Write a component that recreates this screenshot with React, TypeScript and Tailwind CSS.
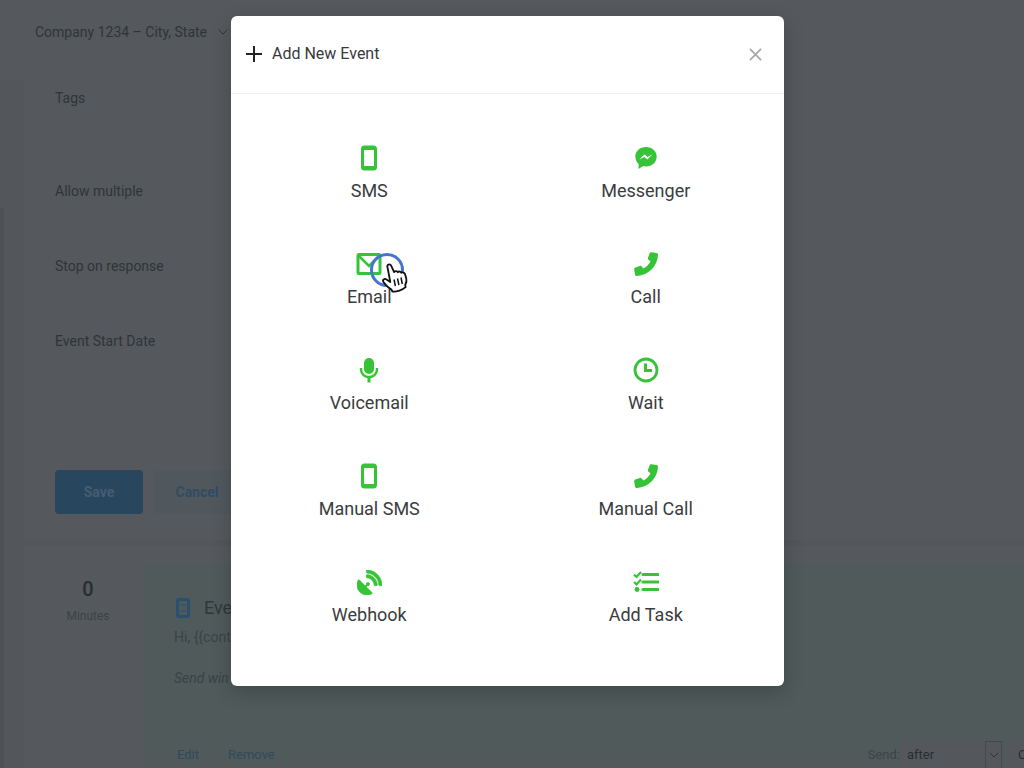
import type { ReactNode } from 'react';
import { FaSatelliteDish } from 'react-icons/fa';

function MobileIcon() {
  return (
    <svg viewBox="0 0 16 26" className="w-4 h-[26px]" fill="none" stroke="currentColor">
      <rect x="1.5" y="2" width="13" height="22" rx="2" strokeWidth="3" />
      <path d="M1.5 3.5h13M1.5 22.5h13" strokeWidth="3" />
    </svg>
  );
}

function MessengerIcon() {
  return (
    <svg viewBox="0 0 24 26" className="w-6 h-[26px]">
      <path
        fill="currentColor"
        d="M12 2C6 2 1.300 6.200 1.300 11.700c0 2.900 1.300 5.500 3.400 7.200L4.400 24l4.800-2.900c.9.200 1.800.3 2.800.3 6 0 10.700-4.200 10.700-9.700S18 2 12 2Z"
      />
      <path fill="#fff" d="m5.500 14.500 5-5.200 3.200 2.600 4.800-2.600-5.100 5.200-3.200-2.600Z" />
    </svg>
  );
}

function MailIcon() {
  return (
    <svg viewBox="0 0 26 26" className="w-[26px] h-[26px]" fill="none" stroke="currentColor">
      <rect x="2" y="3.500" width="22" height="19" rx="1" strokeWidth="3" />
      <path d="m3 5 10 10L23 5" strokeWidth="2.500" />
    </svg>
  );
}

function PhoneIcon() {
  return (
    <svg viewBox="0 0 26 26" className="w-[26px] h-[26px]" fill="currentColor">
      <path d="m18.500 1.200 5 .8c1 .2 1.600 1 1.500 2C24.300 15.500 15.500 24.300 4 25c-1 .1-1.800-.5-2-1.500l-.8-5c-.1-.9.400-1.600 1.200-1.900L6.700 15c.8-.3 1.600-.1 2.100.6l1.400 1.900c3.300-1.500 5.800-4 7.300-7.300l-1.900-1.400c-.7-.5-.9-1.300-.6-2.100l1.600-4.300c.3-.8 1-1.300 1.900-1.200Z" />
    </svg>
  );
}

function MicIcon() {
  return (
    <svg viewBox="0 0 20 26" className="w-5 h-[26px]" fill="none" stroke="currentColor">
      <rect x="5" y="1" width="10" height="16" rx="5" fill="currentColor" stroke="none" />
      <path d="M2 11v1.500a8 7.500 0 0 0 16 0V11" strokeWidth="2.400" />
      <path d="M10 20v5.500" strokeWidth="3" />
    </svg>
  );
}

function ClockIcon() {
  return (
    <svg viewBox="0 0 26 26" className="w-[26px] h-[26px]" fill="none" stroke="currentColor">
      <circle cx="13" cy="13" r="11" strokeWidth="2.800" />
      <path d="M12.500 6.500V13.500H19" strokeWidth="3" />
    </svg>
  );
}

function TaskIcon() {
  return (
    <svg viewBox="0 0 26 26" className="w-[26px] h-[26px]" fill="none" stroke="currentColor">
      <path d="M10 5.500h15M10 13h15M10 20.500h15" strokeWidth="3.200" strokeLinecap="round" />
      <path d="m1 5.500 2.500 2.500L8 3M1 13l2.500 2.500L8 10.500" strokeWidth="2.200" />
      <circle cx="4" cy="20.500" r="2.400" fill="currentColor" stroke="none" />
    </svg>
  );
}

function Pointer() {
  return (
    <svg viewBox="0 0 40 44" className="absolute left-[138px] top-5 w-10 h-11 pointer-events-none">
      <circle cx="18" cy="19" r="15.500" fill="none" stroke="#4773d3" strokeWidth="3" />
      <path
        d="M18.500 16.300c-1.200-2.800 2.600-4.100 3.800-1.400l2.800 6.200c.900-1.500 3-1.300 3.700.1 1.100-1.200 3-.7 3.600.6 1.300-.8 3-.2 3.600 1.300l1.300 4.400c.7 2.500-.2 4.700-1.100 6.500l.4 2.200c-3.100 2.900-9.200 4.800-13.200 4.300l-1.200-2.200c-3-1.300-5.600-4.600-7.700-7.200-1.500-2.200 1-4 3-2.700l3.800 2.600Z"
        fill="#fff"
        stroke="#111"
        strokeWidth="1.800"
        strokeLinejoin="round"
      />
      <path d="m25 28.500 1.400 6.500M28.500 27.500l1.400 6.500M32 26.500l1.300 6.500" stroke="#111" strokeWidth="1.500" />
    </svg>
  );
}

const events: { label: string; icon: ReactNode; active?: boolean }[] = [
  { label: 'SMS', icon: <MobileIcon /> },
  { label: 'Messenger', icon: <MessengerIcon /> },
  { label: 'Email', icon: <MailIcon />, active: true },
  { label: 'Call', icon: <PhoneIcon /> },
  { label: 'Voicemail', icon: <MicIcon /> },
  { label: 'Wait', icon: <ClockIcon /> },
  { label: 'Manual SMS', icon: <MobileIcon /> },
  { label: 'Manual Call', icon: <PhoneIcon /> },
  { label: 'Webhook', icon: <FaSatelliteDish className="w-[25px] h-[25px]" stroke="currentColor" strokeWidth="16" /> },
  { label: 'Add Task', icon: <TaskIcon /> },
];

const fields = [
  { label: 'Tags', height: 'h-[93px]' },
  { label: 'Allow multiple', height: 'h-[75px]' },
  { label: 'Stop on response', height: 'h-[75px]' },
  { label: 'Event Start Date', height: 'h-[139px]' },
];

function CampaignPage() {
  return (
    <div className="h-full flex flex-col">
      <header className="h-16 shrink-0 flex items-center px-[35px]">
        <button className="flex items-center gap-[10px]">
          Company 1234 – City, State
          <svg viewBox="0 0 12 8" className="w-3 h-2" fill="none" stroke="currentColor">
            <path d="m1.500 1.500 4.500 4.500 4.500-4.500" />
          </svg>
        </button>
      </header>

      <div className="flex-1 flex min-h-0">
        <div className="w-6 shrink-0 flex mt-4 bg-[#53575b]">
          <div className="w-1 mt-32 bg-[#4e5256]" />
        </div>
        <main className="flex-1 min-w-0">
          <section className="pt-6 pb-[26px] px-[31px]">
            {fields.map((field) => (
              <div key={field.label} className={field.height}>{field.label}</div>
            ))}
            <div className="flex gap-[10px] font-bold">
              <button className="w-[88px] h-11 rounded bg-[#29465f] text-[#465d70]">Save</button>
              <button className="w-[88px] h-11 rounded bg-[#50585e] text-[#304c63]">Cancel</button>
            </div>
          </section>

          {/* Timeline */}
          <section className="flex border-t-[6px] border-[#53565a] pt-[18px]">
            <div className="w-[120px] shrink-0 pt-[13px] pl-2 text-center">
              <p className="text-xl leading-6 font-medium text-[#282d31]">0</p>
              <p className="mt-[7px] text-xs leading-4 text-[#3c4246]">Minutes</p>
            </div>
            <article className="flex-1 min-w-0 bg-[#505a5b] pt-8 pl-[30px]">
              <h2 className="flex items-center gap-3 text-lg leading-6 text-[#2e373a]">
                <svg viewBox="0 0 18 24" className="w-[18px] h-6" fill="none" stroke="#28506f">
                  <rect x="3.500" y="3.500" width="11" height="17" rx="1.500" strokeWidth="3" />
                  <path d="M6 9h6M6 15h6" strokeWidth="1" />
                </svg>
                Event
              </h2>
              <p className="mt-[7px] text-[#394346]">Hi, {'{{contact'}</p>
              <p className="mt-[21px] italic text-[#394346]">Send win</p>
              <div className="mt-[55px] flex items-center h-6 text-[13px] text-[#30495c]">
                <button className="ml-[3px]">Edit</button>
                <button className="ml-[29px]">Remove</button>
                <div className="ml-auto flex items-center text-[#282d31]">
                  <label htmlFor="send" className="text-[#3b4447]">Send:</label>
                  <div className="relative">
                    <select id="send" className="appearance-none w-[102px] h-7 pl-[7px] bg-[#54585c]">
                      <option>after</option>
                    </select>
                    <span className="absolute right-0 inset-y-0 w-[17px] flex items-center justify-center border border-[#44484c] pointer-events-none">
                      <svg viewBox="0 0 12 8" className="w-3 h-2" fill="none" stroke="#303438">
                        <path d="m2 2 4 4 4-4" />
                      </svg>
                    </span>
                  </div>
                  <select aria-label="Delay" className="appearance-none w-[18px] h-7 ml-1 pl-3 bg-[#54585c]">
                    <option>Custom</option>
                  </select>
                </div>
              </div>
            </article>
          </section>
        </main>
      </div>
    </div>
  );
}

export default function App() {
  return (
    <div className="relative h-screen overflow-hidden bg-[#55595d] text-sm text-[#303438] font-['Roboto',sans-serif]">
      <CampaignPage />

      <div className="absolute inset-0 flex justify-center items-start pt-4 pr-[9px]">
        <div role="dialog" aria-labelledby="dialog-title" className="w-[553px] rounded-md bg-white shadow-[0_6px_20px_rgba(0,0,0,0.2)]">
          <div className="h-[78px] flex items-center border-b border-[#eef1f3] pl-[15px] pr-[22px] pb-px">
            <svg viewBox="0 0 16 16" className="w-4 h-4 mr-[10px]" stroke="#222" strokeWidth="2">
              <path d="M8 0v16M0 8h16" />
            </svg>
            <h1 id="dialog-title" className="text-base leading-6 text-[#37393b]">Add New Event</h1>
            <button aria-label="Close" className="ml-auto">
              <svg viewBox="0 0 14 14" className="w-[13px] h-[13px]" stroke="#aaa" strokeWidth="2">
                <path d="m1 1 12 12M13 1 1 13" />
              </svg>
            </button>
          </div>
          <div className="grid grid-cols-2 py-[31px]">
            {events.map((event) => (
              <button key={event.label} className="relative h-[106px] pt-5 pb-7 flex flex-col items-center text-[#3a3c3e]">
                <span className="h-[26px] mb-2 flex items-center text-[#37c337]">{event.icon}</span>
                <span className="text-lg leading-6">{event.label}</span>
                {event.active && <Pointer />}
              </button>
            ))}
          </div>
        </div>
      </div>
    </div>
  );
}
